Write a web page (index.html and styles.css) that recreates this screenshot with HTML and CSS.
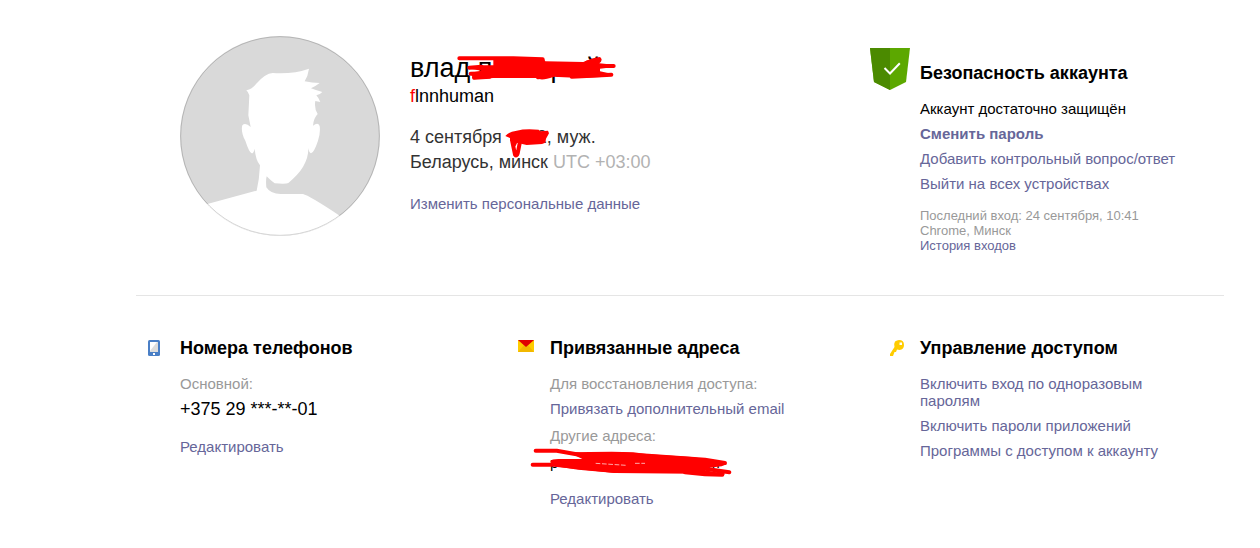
FILE: index.html
```html
<!DOCTYPE html>
<html lang="ru">
<head>
<meta charset="utf-8">
<title>Паспорт</title>
<link rel="stylesheet" href="styles.css">
</head>
<body>
<div class="page">

<div class="row">
 <div class="profile">
  <svg class="avatar" viewBox="30 30 600 600" role="img" aria-label="Аватар">
   <defs><clipPath id="round"><circle cx="330" cy="330" r="300"/></clipPath></defs>
   <g clip-path="url(#round)">
    <rect x="30" y="30" width="600" height="600" fill="#d9d9d9"/>
    <path fill="#fff" d="M30 556 L112 534 L260 494 Q268 460 270 418 Q257 402 254 368 Q251 382 245 382 Q237 378 226 344 C215 324 214 306 217 298 Q226 288 242 303 L235 268 L238 208 Q235 198 229 193 Q246 190 258 174 Q286 142 308 141 Q370 145 417 128 Q414 150 404 166 Q426 171 449 171 Q436 181 423 187 Q441 194 457 198 Q450 206 439 208 Q447 217 451 228 L436 225 Q432 246 443 264 Q431 276 429 299 Q444 287 449 300 Q452 320 444 344 Q432 380 423 382 Q417 380 415 366 C416 404 394 440 355 471 Q348 475 314 472 Q305 466 290 451 Q287 462 289 484 Q302 505 335 504 L399 504 Q417 508 509 569 L640 650 L30 650 Z"/>
   </g>
   <circle cx="330" cy="330" r="298" fill="none" stroke="#000" stroke-opacity=".17" stroke-width="3"/>
  </svg>
  <div class="info">
   <h1 class="name">влад п<span class="gap gap-long"></span>р<span class="gap gap-short"></span>й
    <svg class="scribble scribble-name" viewBox="165 39 495 90" aria-hidden="true">
     <path class="blot" d="M280 54 L430 54 L436 64 L550 66 Q580 52 600 52 Q610 60 598 70 L640 74 L636 82 L600 86 L600 94 L638 102 L620 110 L540 114 L460 110 Q425 124 410 114 L280 114 L220 118 L212 98 L245 92 L208 86 L245 76 L280 76 Z"/>
     <path class="line" d="M178 55 L340 55 L428 58 M208 83 L245 80 M212 101 L280 100 M222 113 L270 110 M560 68 L598 58 M580 78 L641 78 M515 110 L634 104 M414 112 L460 104"/>
    </svg>
   </h1>
   <div class="login"><span class="first">f</span>lnnhuman</div>
   <div class="personal">
    <div>4 сентября <span class="gap gap-year"></span>2, муж.</div>
    <div>Беларусь, минск <span class="zone">UTC +03:00</span></div>
    <svg class="scribble scribble-year" viewBox="312 54 138 90" aria-hidden="true">
     <path class="blot" d="M316 78 Q328 64 350 62 Q375 55 416 59 L420 64 L444 62 L447 70 L438 86 L436 98 L426 102 L380 105 L350 98 L330 92 L330 84 Z"/>
     <path class="line" d="M336 90 L345 134 Q350 140 353 130 L359 100 M348 92 L340 108"/>
    </svg>
   </div>
   <a class="edit" href="#">Изменить персональные данные</a>
  </div>
 </div>

 <div class="block security">
  <div class="icon">
   <svg class="shield" viewBox="0 0 40 42" aria-hidden="true">
    <path fill="#5ca800" d="M0 0H40L36 34L20 42L4 34Z"/>
    <path fill="#4b8a00" d="M0 0H20V42L4 34Z"/>
    <path fill="none" stroke="#fff" stroke-width="2" d="M14.5 20L20 25.5L29.8 15.2"/>
   </svg>
  </div>
  <div class="content">
   <h2>Безопасность аккаунта</h2>
   <ul>
    <li>Аккаунт достаточно защищён</li>
    <li><a class="strong" href="#">Сменить пароль</a></li>
    <li><a href="#">Добавить контрольный вопрос/ответ</a></li>
    <li><a href="#">Выйти на всех устройствах</a></li>
   </ul>
   <div class="last">
    Последний вход: 24 сентября, 10:41<br>
    Chrome, Минск<br>
    <a href="#">История входов</a>
   </div>
  </div>
 </div>
</div>

<hr>

<div class="row">
 <div class="block">
  <div class="icon">
   <svg class="phone-icon" viewBox="0 0 12 16" aria-hidden="true">
    <rect width="12" height="16" rx="1.5" fill="#4a7fc6"/>
    <rect x="2" y="2" width="8" height="10" fill="#ddd"/>
    <path fill="#fff" d="M2 2H9L2 11Z"/>
    <rect x="5" y="13" width="2" height="2" fill="#fff"/>
   </svg>
  </div>
  <div class="content">
   <h2>Номера телефонов</h2>
   <div class="label">Основной:</div>
   <div class="phone">+375 29 ***-**-01</div>
   <a class="edit" href="#">Редактировать</a>
  </div>
 </div>

 <div class="block">
  <div class="icon">
   <svg class="mail-icon" viewBox="0 0 16 12" aria-hidden="true">
    <rect width="16" height="12" fill="#fc0"/>
    <path fill="#f2b800" d="M0 12L6 5H10L16 12Z"/>
    <path fill="#e00000" d="M0 0H16L8 7Z"/>
   </svg>
  </div>
  <div class="content">
   <h2>Привязанные адреса</h2>
   <div class="label">Для восстановления доступа:</div>
   <a class="add" href="#">Привязать дополнительный email</a>
   <div class="label">Другие адреса:</div>
   <div class="address">p<span class="gap gap-mail"></span>m
    <svg class="scribble scribble-mail" viewBox="75 366 609 93" aria-hidden="true">
     <path class="blot" d="M136 408 Q140 402 160 402 L232 402 L190 382 L320 380 L385 382 L430 388 L560 396 L600 402 L660 410 L665 418 L650 424 L600 430 L600 436 L660 446 L655 452 L610 452 L560 446 L330 444 L220 434 L140 422 Z"/>
     <path class="line" d="M92 377 L155 377 L240 392 M83 419 L150 419 L330 438 M330 387 L430 392 L600 404 L660 414 M590 430 L673 442 M540 442 L600 448 L652 449"/>
     <path class="trace" d="M272 415 L364 421 M390 415 L420 415"/>
    </svg>
   </div>
   <a class="edit" href="#">Редактировать</a>
  </div>
 </div>

 <div class="block">
  <div class="icon">
   <svg class="key-icon" viewBox="0 0 14 16" aria-hidden="true">
    <path fill="#fc0" fill-rule="evenodd" d="M5 1.5Q7 0 9 0Q14 0 14 5Q14 9.5 9.5 10L7 9.5L6 12H4.5L3 16H0V14L4.5 7Q3.5 4 5 1.5ZM9.5 2.5V5H12V2.5Z"/>
   </svg>
  </div>
  <div class="content">
   <h2>Управление доступом</h2>
   <ul>
    <li><a href="#">Включить вход по одноразовым паролям</a></li>
    <li><a href="#">Включить пароли приложений</a></li>
    <li><a href="#">Программы с доступом к аккаунту</a></li>
   </ul>
  </div>
 </div>
</div>

</div>
</body>
</html>
```

FILE: styles.css
```css
body{
	margin: 0;
	background: #fff;
	color: #000;
	font: 15px/17px "Liberation Sans", Arial, sans-serif;
}

a{
	color: #669;
	text-decoration: none;
}

h1, h2, ul{
	margin: 0;
	padding: 0;
}

h2{
	margin-bottom: 15px;
	font-size: 18px;
	line-height: 23px;
}

ul{
	list-style: none;
}

li + li{
	margin-top: 8px;
}

hr{
	height: 1px;
	margin: 42px 0 41px;
	border: 0;
	background: #e5e5e5;
}

.page{
	padding: 36px 36px 36px 136px;
}

.row{
	display: grid;
	grid-template-columns: repeat(3, 1fr);
	column-gap: 66px;
	padding-right: 44px;
}

/* profile */
.profile{
	grid-column: span 2;
	display: flex;
	align-items: flex-start;
	gap: 30px;
	padding-left: 44px;
}

.avatar{
	flex: none;
	width: 200px;
	height: 200px;
}

.info{
	padding-top: 16px;
}

.name{
	position: relative;
	font-size: 27px;
	font-weight: normal;
	line-height: 33px;
	white-space: nowrap;
}

.login{
	font-size: 18px;
	line-height: 23px;
}

.first{
	color: #f00;
}

.personal{
	position: relative;
	margin: 17px 0 20px;
	color: #333;
	font-size: 18px;
	line-height: 25px;
}

.zone{
	color: #b2b2b2;
}

/* blocks */
.block{
	display: flex;
}

.icon{
	flex: none;
	width: 32px;
	padding-left: 12px;
}

.icon svg{
	display: block;
}

.content{
	flex: 1;
	min-width: 0;
}

.security .icon{
	width: 50px;
	margin-left: -6px;
	padding: 12px 0 0;
}

.security .content{
	padding-top: 26px;
}

.strong{
	font-weight: bold;
}

.last{
	margin-top: 16px;
	color: #999;
	font-size: 13px;
	line-height: 15px;
}

.label{
	color: #999;
}

.phone{
	margin: 6px 0 17px;
	font-size: 18px;
	line-height: 23px;
}

.add, .edit{
	display: block;
}

.add{
	margin: 8px 0 10px;
}

.address{
	position: relative;
	margin: 10px 0 19px;
}

/* icons */
.shield{
	width: 40px;
	height: 42px;
}

.phone-icon{
	width: 12px;
	height: 16px;
	margin-top: 3px;
}

.mail-icon{
	width: 16px;
	height: 12px;
	margin-top: 3px;
}

.key-icon{
	width: 14px;
	height: 16px;
	margin: 3px 0 0 2px;
}

/* hidden parts */
.gap{
	display: inline-block;
}

.gap-long{ width: 58px; }
.gap-short{ width: 20px; }
.gap-year{ width: 30px; }
.gap-mail{ width: 149px; }

.scribble{
	position: absolute;
}

.scribble-name{
	top: 1px;
	left: 45px;
	width: 165px;
	height: 30px;
}

.scribble-year{
	top: 3px;
	left: 94px;
	width: 46px;
	height: 30px;
}

.scribble-mail{
	top: -7px;
	left: -20px;
	width: 203px;
	height: 31px;
}

.blot{
	fill: #f00;
}

.line{
	fill: none;
	stroke: #f00;
	stroke-width: 12;
	stroke-linecap: round;
	stroke-linejoin: round;
}

.trace{
	fill: none;
	stroke: #fff;
	stroke-width: 2;
	stroke-dasharray: 14 5;
}
```
